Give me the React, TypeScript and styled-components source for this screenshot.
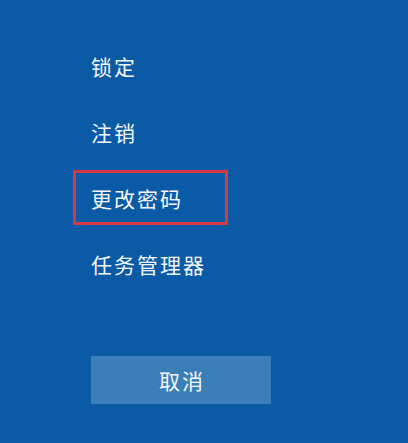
import React from "react";
import styled, { createGlobalStyle } from "styled-components";

const Global = createGlobalStyle`
  html, body { margin: 0; padding: 0; background: #0b5aa5; }
  #root { width: 408px; height: 443px; }
`;

const Screen = styled.div`
  width: 408px;
  height: 443px;
  background: #0b5aa5;
  box-sizing: border-box;
  padding: 33px 0 0 91px;
  display: flex;
  flex-direction: column;
  font-family: "Noto Sans CJK SC", "Noto Sans", sans-serif;
  color: #f4f8fc;
`;

const Menu = styled.div`
  display: flex;
  flex-direction: column;
`;

const Item = styled.div<{ $marked?: boolean }>`
  position: relative;
  height: 66px;
  display: flex;
  align-items: center;
  font-size: 21px;
  font-weight: 400;
  letter-spacing: 2px;
  line-height: 1;
  &::after {
    content: "";
    display: ${(p) => (p.$marked ? "block" : "none")};
    position: absolute;
    left: -18px;
    top: 5px;
    width: 155px;
    height: 55px;
    box-sizing: border-box;
    border: 3px solid #d8383f;
  }
`;

const CancelButton = styled.button`
  margin-top: 59px;
  width: 180px;
  height: 48px;
  border: none;
  background: #3b7eb8;
  color: #f4f8fc;
  font-family: "Noto Sans CJK SC", "Noto Sans", sans-serif;
  font-size: 21px;
  font-weight: 400;
  letter-spacing: 2px;
  padding: 0 0 0 2px;
  display: flex;
  align-items: center;
  justify-content: center;
`;

const items = ["锁定", "注销", "更改密码", "任务管理器"];

export default function App() {
  return (
    <>
      <Global />
      <Screen>
        <Menu>
          {items.map((t) => (
            <Item key={t} $marked={t === "更改密码"}>
              {t}
            </Item>
          ))}
        </Menu>
        <CancelButton>取消</CancelButton>
      </Screen>
    </>
  );
}
